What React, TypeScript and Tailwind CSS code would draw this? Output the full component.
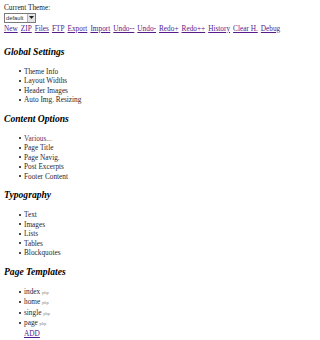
const links = ["New", "ZIP", "Files", "FTP", "Export", "Import", "Undo--", "Undo-", "Redo+", "Redo++", "History", "Clear H.", "Debug"];

const sections: { title: string; items: string[] }[] = [
  { title: "Global Settings", items: ["Theme Info", "Layout Widths", "Header Images", "Auto Img. Resizing"] },
  { title: "Content Options", items: ["Various...", "Page Title", "Page Navig.", "Post Excerpts", "Footer Content"] },
  { title: "Typography", items: ["Text", "Images", "Lists", "Tables", "Blockquotes"] },
];

const templates = ["index", "home", "single", "page"];

function Item({ children, className = "" }: { children: React.ReactNode; className?: string }) {
  return (
    <li className={"flex items-center " + className}>
      <span className="w-[2px] h-[2px] mr-[3px] rounded-full bg-[#111]" />
      <span>{children}</span>
    </li>
  );
}

function Section({ title, children }: { title: string; children: React.ReactNode }) {
  return (
    <div className="mt-[8px] first:mt-[12px]">
      <h3 className="text-[9.6px] leading-[11px] font-bold italic text-black">{title}</h3>
      <ul className="mt-[10px] pl-[15px] text-[#2e1f2e]">{children}</ul>
    </div>
  );
}

export default function App() {
  return (
    <div className="w-[310px] h-[340px] overflow-hidden bg-white px-[4px] pt-[3px] font-['Liberation_Serif','Times_New_Roman',serif] text-[7.3px] leading-[9.5px] text-[#222]">
      <div>Current Theme:</div>
      <div className="flex items-stretch w-[32px] h-[10px] border border-[#7a7a7a] bg-white">
        <span className="flex-1 pl-[1px] text-[5.8px] leading-[8px] font-['Liberation_Sans',Arial,sans-serif] text-[#333]">default</span>
        <span className="w-[8px] flex items-center justify-center bg-[#e4e4e4] border-l border-[#b5b5b5]">
          <svg width="5" height="3" viewBox="0 0 5 3">
            <path d="M0 0 L5 0 L2.5 3 Z" fill="#222" />
          </svg>
        </span>
      </div>
      <div className="flex flex-wrap gap-x-[3px] leading-[11px]">
        {links.map((l) => (
          <a key={l} className="text-[#551a8b] underline cursor-pointer">{l}</a>
        ))}
      </div>

      <div>
        {sections.map((s) => (
          <Section key={s.title} title={s.title}>
            {s.items.map((i) => (
              <Item key={i} className={i === "Various..." ? "text-[#5e3358]" : ""}>{i}</Item>
            ))}
          </Section>
        ))}

        <Section title="Page Templates">
          {templates.map((t) => (
            <Item key={t}>
              {t} <span className="text-[4.5px] text-[#888]">php</span>
            </Item>
          ))}
          <a className="block pl-[5px] text-[#551a8b] underline cursor-pointer">ADD</a>
        </Section>
      </div>
    </div>
  );
}
